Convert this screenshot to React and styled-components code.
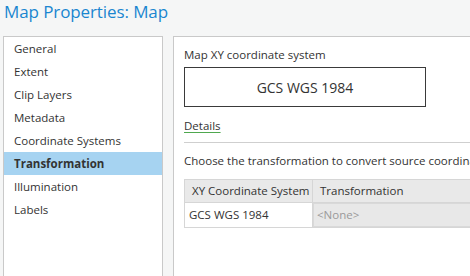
import React from 'react';
import styled, { createGlobalStyle } from 'styled-components';

const Global = createGlobalStyle`
  html, body {
    margin: 0;
    padding: 0;
    background: #f5f6f6;
    overflow: hidden;
  }
  body {
    font-family: 'Segoe UI', 'Open Sans', 'Noto Sans', sans-serif;
    color: #333;
  }
`;

const Window = styled.div`
  width: 470px;
  height: 276px;
  display: flex;
  flex-direction: column;
  overflow: hidden;
`;

const Title = styled.h1`
  margin: 0;
  height: 36px;
  padding: 0 0 0 4px;
  font-size: 17px;
  font-weight: 400;
  line-height: 24px;
  color: #1a86d0;
  letter-spacing: -0.1px;
`;

const Body = styled.div`
  display: flex;
  gap: 10px;
  padding-left: 3px;
  flex: 1;
  min-height: 0;
`;

const Nav = styled.ul`
  list-style: none;
  margin: 0;
  padding: 0;
  width: 158px;
  flex: none;
  background: #fff;
  border: 1px solid #c9c9c9;
  border-bottom: none;
`;

const NavItem = styled.li`
  height: 23px;
  line-height: 23px;
  padding-left: 10px;
  font-size: 11.5px;
  font-weight: ${(p) => (p.$active ? 700 : 400)};
  background: ${(p) => (p.$active ? '#a6d3f1' : 'transparent')};
  color: #333;
  white-space: nowrap;
`;

const Panel = styled.section`
  flex: 1;
  min-width: 0;
  background: #fff;
  border: 1px solid #c9c9c9;
  border-right: none;
  border-bottom: none;
  padding: 10px 0 0 10px;
  display: flex;
  flex-direction: column;
  font-size: 11.5px;
  white-space: nowrap;
  overflow: hidden;
`;

const Label = styled.div`
  line-height: 16px;
`;

const SystemBox = styled.div`
  margin-top: 4px;
  width: 240px;
  height: 38px;
  border: 1px solid #3a3a3a;
  display: flex;
  align-items: center;
  justify-content: center;
  font-size: 14px;
`;

const DetailsLink = styled.a`
  margin-top: 11px;
  align-self: flex-start;
  line-height: 16px;
  color: #333;
  text-decoration: underline;
  text-decoration-color: #4fa84f;
  text-underline-offset: 2px;
`;

const Divider = styled.hr`
  margin: 8px 0 0 0;
  border: none;
  border-top: 1px solid #cfcfcf;
  height: 0;
`;

const Hint = styled.div`
  margin-top: 10px;
  line-height: 16px;
`;

const Grid = styled.div`
  margin-top: 10px;
  display: grid;
  grid-template-columns: 128px 300px;
  border-bottom: 1px solid #d6d6d6;
  align-self: flex-start;
`;

const HeadCell = styled.div`
  height: 22px;
  line-height: 22px;
  padding-left: 7px;
  background: #e9e9e9;
  border-top: 1px solid #d6d6d6;
  border-left: 1px solid #d6d6d6;
  border-bottom: 1px solid #d6d6d6;
`;

const Cell = styled.div`
  height: 24px;
  line-height: 24px;
  padding-left: 4px;
  background: ${(p) => (p.$muted ? '#e8e8e8' : '#fff')};
  color: ${(p) => (p.$muted ? '#9a9a9a' : '#333')};
  border-left: 1px solid #d6d6d6;
  box-shadow: ${(p) => (p.$muted ? 'inset 0 0 0 1px #d9d9d9' : 'none')};
`;

const navItems = [
  'General',
  'Extent',
  'Clip Layers',
  'Metadata',
  'Coordinate Systems',
  'Transformation',
  'Illumination',
  'Labels',
];

export default function App() {
  return (
    <Window>
      <Global />
      <Title>Map Properties: Map</Title>
      <Body>
        <Nav>
          {navItems.map((item) => (
            <NavItem key={item} $active={item === 'Transformation'}>
              {item}
            </NavItem>
          ))}
        </Nav>
        <Panel>
          <Label>Map XY coordinate system</Label>
          <SystemBox>GCS WGS 1984</SystemBox>
          <DetailsLink href="#">Details</DetailsLink>
          <Divider />
          <Hint>Choose the transformation to convert source coordinate systems to the map's coordinate system.</Hint>
          <Grid>
            <HeadCell>XY Coordinate System</HeadCell>
            <HeadCell>Transformation</HeadCell>
            <Cell>GCS WGS 1984</Cell>
            <Cell $muted>&lt;None&gt;</Cell>
          </Grid>
        </Panel>
      </Body>
    </Window>
  );
}
